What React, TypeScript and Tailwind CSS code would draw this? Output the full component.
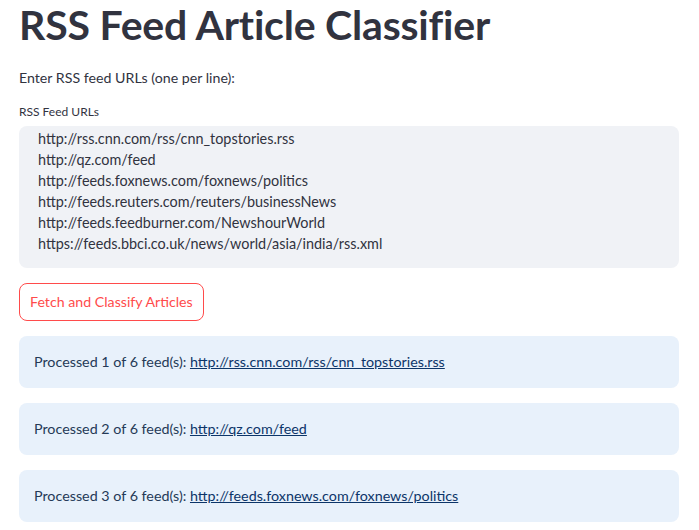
const feeds = [
  "http://rss.cnn.com/rss/cnn_topstories.rss",
  "http://qz.com/feed",
  "http://feeds.foxnews.com/foxnews/politics",
  "http://feeds.reuters.com/reuters/businessNews",
  "http://feeds.feedburner.com/NewshourWorld",
  "https://feeds.bbci.co.uk/news/world/asia/india/rss.xml",
];

function Notice({ n, url }: { n: number; url: string }) {
  return (
    <div className="rounded-lg bg-[#e8f1fb] px-[15px] h-[52px] flex items-center text-[14.3px] text-[#253a57]">
      <p>
        Processed {n} of 6 feed(s):{" "}
        <a href="#" className="underline text-[#0c3569]">
          {url}
        </a>
      </p>
    </div>
  );
}

export default function App() {
  return (
    <div className="bg-white min-h-[530px] pl-[19px] pr-[20px] text-[#31333f] font-['Lato',sans-serif]">
      <h1 className="pt-[1px] text-[41px] font-bold leading-[48px] tracking-[-0.2px] text-[#31333f]">
        RSS Feed Article Classifier
      </h1>

      <p className="mt-[17px] text-[14.2px] leading-[24px]">
        Enter RSS feed URLs (one per line):
      </p>

      <label className="block mt-[14px] text-[12px] leading-[16px]">RSS Feed URLs</label>

      <div className="mt-[6px] h-[142px] rounded-lg bg-[#f0f2f6] pl-[19px] pt-[2px] text-[14.4px] leading-[21px]">
        {feeds.map((f) => (
          <div key={f}>{f}</div>
        ))}
      </div>

      <button className="mt-[15px] h-[38px] px-[10px] rounded-lg border border-[#ff4b4b] bg-white text-[14.2px] text-[#ff4b4b]">
        Fetch and Classify Articles
      </button>

      <div className="mt-[15px] flex flex-col gap-[15px]">
        <Notice n={1} url={feeds[0]} />
        <Notice n={2} url={feeds[1]} />
        <Notice n={3} url={feeds[2]} />
      </div>
    </div>
  );
}
